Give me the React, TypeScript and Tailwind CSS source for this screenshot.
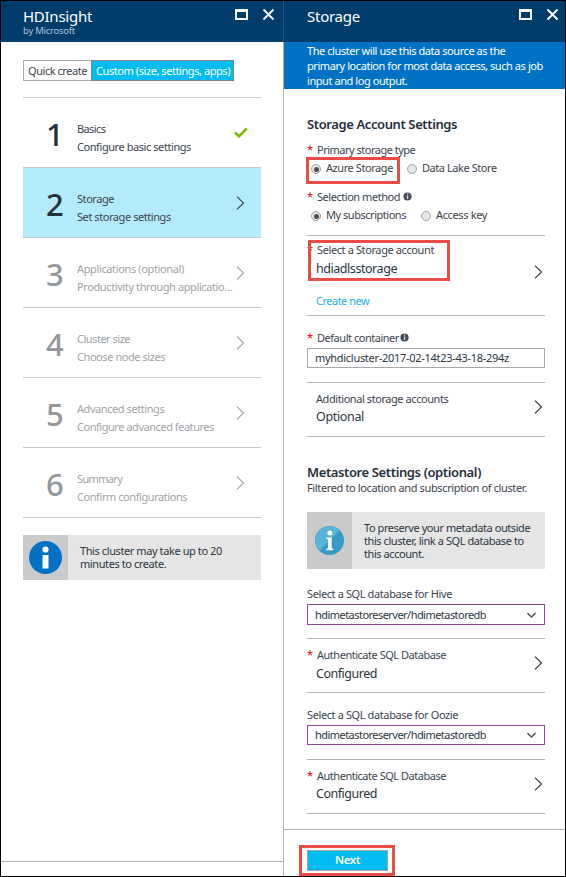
import type { ReactNode } from "react";

function WindowButtons() {
  return (
    <svg width="40" height="14" viewBox="0 0 40 14" fill="none" className="text-white">
      <path d="M0 2h13v11H0zM2 5v6h9V5z" fill="currentColor" fillRule="evenodd" />
      <path d="M28.5 2.5l10 10M38.5 2.5l-10 10" stroke="currentColor" strokeWidth="1.8" />
    </svg>
  );
}

function Chevron({ className = "" }: { className?: string }) {
  return (
    <svg width="9" height="14" viewBox="0 0 9 14" fill="none" className={`shrink-0 ${className}`}>
      <path d="M1 0.7L7.5 7L1 13.3" stroke="currentColor" strokeWidth="1.1" />
    </svg>
  );
}

function BladeHeader({ title, by, pad }: { title: string; by?: string; pad: string }) {
  return (
    <header className={`flex h-[41px] justify-between bg-[#003d6b] pt-[6px] ${pad}`}>
      <div>
        <h1 className="text-[15px] leading-[18px] tracking-[-0.26px] text-white">{title}</h1>
        {by && <p className="text-[9.5px] leading-[11px] tracking-[-0.26px] text-[#a9c3dc]">{by}</p>}
      </div>
      <WindowButtons />
    </header>
  );
}

type Step = { n: number; title: string; sub: string; t1: string; t2: string; state: "done" | "active" | "off" };

const steps: Step[] = [
  { n: 1, title: "Basics", sub: "Configure basic settings", t1: "tracking-[-0.6px]", t2: "", state: "done" },
  { n: 2, title: "Storage", sub: "Set storage settings", t1: "", t2: "", state: "active" },
  { n: 3, title: "Applications (optional)", sub: "Productivity through applicatio...", t1: "tracking-[-0.37px]", t2: "tracking-[-0.39px]", state: "off" },
  { n: 4, title: "Cluster size", sub: "Choose node sizes", t1: "tracking-[-0.49px]", t2: "", state: "off" },
  { n: 5, title: "Advanced settings", sub: "Configure advanced features", t1: "", t2: "tracking-[-0.46px]", state: "off" },
  { n: 6, title: "Summary", sub: "Confirm configurations", t1: "tracking-[-0.66px]", t2: "", state: "off" },
];

function StepRow({ step }: { step: Step }) {
  const off = step.state === "off";
  return (
    <li
      className={`flex h-[70px] border-t border-[#c8c8c8] pl-[23px] ${step.state === "active" ? "bg-[#b3ebfb]" : ""} ${off ? "text-[#a0a3a6]" : "text-[#3b444d]"}`}
    >
      <div className={`w-[31px] pt-[14px] text-[31px] font-medium leading-[44px] ${off ? "text-[#94979a]" : "text-[#25303b]"}`}>
        {step.n}
      </div>
      <div className="flex w-[159px] flex-col gap-px whitespace-nowrap pt-[22px] leading-[17px]">
        <div className={step.t1}>{step.title}</div>
        <div className={step.t2}>{step.sub}</div>
      </div>
      {step.state === "done" ? (
        <svg width="14" height="12" viewBox="0 0 14 12" fill="none" className="mt-[29px] -ml-[2px]">
          <path d="M0.9 5.4L5 9.3L12.7 1.4" stroke="#7fba00" strokeWidth="2.6" />
        </svg>
      ) : (
        <Chevron className="mt-[28px]" />
      )}
    </li>
  );
}

function Star() {
  return (
    <svg width="6" height="6" viewBox="0 0 6 6" className="mt-[3px] mr-[4px] shrink-0">
      <path d="M3 0.3V3M0.5 2.2L3 3L5.5 2.2M1.4 5.3L3 3L4.6 5.3" stroke="#e0242f" strokeWidth="1.1" fill="none" />
    </svg>
  );
}

function Hint({ className = "" }: { className?: string }) {
  return (
    <svg width="9" height="9" viewBox="0 0 9 9" className={`mt-[3px] ${className}`}>
      <circle cx="4.5" cy="4.5" r="4.1" fill="#464f59" />
      <path d="M4 1.6h1.2v1.2H4zM4 3.6h1.2v3.5H4z" fill="#d5d8da" />
    </svg>
  );
}

function Label({ children, className = "" }: { children: ReactNode; className?: string }) {
  return <div className={`flex h-[15px] whitespace-nowrap leading-[15px] text-[#3b444d] ${className}`}>{children}</div>;
}

function Radio({ checked, children, className = "" }: { checked?: boolean; children: ReactNode; className?: string }) {
  return (
    <div className={`flex h-[15px] items-start whitespace-nowrap leading-[15px] ${className}`}>
      <span className="mt-[4px] mr-[5px] flex size-[10px] items-center justify-center rounded-full border border-[#a2a2a2] bg-[#e6e6e6]">
        {checked && <span className="size-[5px] rounded-full bg-[#4c4c4c]" />}
      </span>
      {children}
    </div>
  );
}

function Rule({ className = "" }: { className?: string }) {
  return <div className={`h-px bg-[#b0b2b4] ${className}`} />;
}

function Value({ children, className = "" }: { children: ReactNode; className?: string }) {
  return <div className={`pl-[9px] text-[12.5px] leading-[17px] text-[#2c3640] ${className}`}>{children}</div>;
}

function Select({ className }: { className: string }) {
  return (
    <div className={`mt-[3px] flex items-center justify-between border border-[#8f4896] pr-[7px] pl-[7px] text-[#2c3640] ${className}`}>
      <span className="leading-[15px] tracking-[-0.54px]">hdimetastoreserver/hdimetastoredb</span>
      <svg width="11" height="8" viewBox="0 0 11 8" fill="none">
        <path d="M1.4 2L5.5 6L9.6 2" stroke="#4a525a" strokeWidth="1.5" />
      </svg>
    </div>
  );
}

function Highlight({ className }: { className: string }) {
  return <div className={`pointer-events-none absolute border-3 border-[#e84c46] ${className}`} />;
}

export default function App() {
  return (
    <div className="relative flex h-[877px] w-[566px] overflow-hidden border border-black bg-white font-['Noto_Sans','Open_Sans',sans-serif] text-[11px] tracking-[-0.43px]">
      <section className="flex w-[282px] flex-col">
        <BladeHeader title="HDInsight" by="by Microsoft" pad="pl-[22px] pr-[8px]" />
        <div className="flex-1 pr-[22px] pl-[22px]">
          <div className="mt-[18px] flex h-[21px] w-[211px] whitespace-nowrap leading-[20px]">
            <div className="w-[68px] border border-r-0 border-[#aaaaaa] pl-[4px] text-[#3b444d] tracking-[-0.45px]">Quick create</div>
            <div className="flex-1 border border-[#7f8386] bg-[#00bcf2] pl-[4px] text-white">Custom (size, settings, apps)</div>
          </div>
          <ul className="mt-[16px] border-b border-[#c8c8c8]">
            {steps.map((s) => (
              <StepRow key={s.n} step={s} />
            ))}
          </ul>
          <div className="mt-[17px] flex h-[45px] bg-[#e5e5e5]">
            <div className="flex w-[45px] items-center justify-center bg-[#cacaca]">
              <svg width="33" height="33" viewBox="0 0 33 33">
                <circle cx="16.5" cy="16.5" r="16.5" fill="#0072c6" />
                <circle cx="16.5" cy="8.5" r="3.1" fill="#fff" />
                <path d="M13.5 14h6v13.5h-6z" fill="#fff" />
              </svg>
            </div>
            <p className="pt-[9px] pl-[12px] leading-[13px] tracking-[-0.41px] text-[#2c3640]">
              This cluster may take up to 20
              <br />
              minutes to create.
            </p>
          </div>
        </div>
        <footer className="h-[15px] border-t border-[#b0b0b0]" />
      </section>

      <div className="w-px bg-[#b0b0b0]">
        <div className="h-[41px] bg-[#1f5583]" />
      </div>

      <section className="flex w-[281px] flex-col">
        <BladeHeader title="Storage" pad="pl-[23px] pr-[6px]" />
        <div className="h-[47px] whitespace-nowrap bg-[#0072c6] pt-px pl-[23px] leading-[15px] text-white">
          The cluster will use this data source as the
          <br />
          primary location for most data access, such as job
          <br />
          input and log output.
        </div>

        <div className="flex w-[261px] flex-col pt-[26px] pl-[23px]">
          <h2 className="text-[13px] font-semibold leading-[18px] tracking-[-0.39px] text-[#25303b]">Storage Account Settings</h2>
          <Label className="mt-[9px] tracking-[-0.5px]">
            <Star />
            Primary storage type
          </Label>
          <div className="mt-[3px] flex pl-[4px] text-[#3b444d]">
            <Radio checked>Azure Storage</Radio>
            <Radio className="ml-[14px]">Data Lake Store</Radio>
          </div>
          <Label className="mt-[14px] tracking-[-0.46px]">
            <Star />
            Selection method
            <Hint className="ml-[3px]" />
          </Label>
          <div className="mt-[3px] flex pl-[4px] text-[#3b444d]">
            <Radio checked className="tracking-[-0.47px]">My subscriptions</Radio>
            <Radio className="ml-[15px] tracking-[-0.36px]">Access key</Radio>
          </div>
          <Rule className="mt-[13px]" />

          <div className="flex justify-between">
            <div>
              <Label className="mt-[6px] tracking-[-0.39px]">
                <Star />
                Select a Storage account
              </Label>
              <Value className="mt-[3px] tracking-[-0.45px]">hdiadlsstorage</Value>
              <div className="mt-[16px] pl-[9px] leading-[15px] tracking-[-0.5px] text-[#1fb1ec]">Create new</div>
            </div>
            <Chevron className="mt-[29px] mr-[2px] text-[#2c3640]" />
          </div>
          <Rule className="mt-[7px]" />

          <Label className="mt-[14px] tracking-[-0.47px]">
            <Star />
            Default container
            <Hint className="ml-px" />
          </Label>
          <div className="mt-[3px] h-[20px] border border-[#a6a8aa] pl-[7px] leading-[17px] tracking-[-0.29px] text-[#2c3640]">
            myhdicluster-2017-02-14t23-43-18-294z
          </div>
          <Rule className="mt-[14px]" />

          <div className="flex justify-between">
            <div>
              <Label className="mt-[8px] pl-[9px]">Additional storage accounts</Label>
              <Value className="mt-[2px] tracking-[-0.34px]">Optional</Value>
            </div>
            <Chevron className="mt-[17px] mr-[2px] text-[#2c3640]" />
          </div>
          <Rule className="mt-[11px]" />

          <h2 className="mt-[26px] text-[13px] font-semibold leading-[18px] tracking-[-0.38px] text-[#25303b]">Metastore Settings (optional)</h2>
          <Label className="-mt-px tracking-[-0.37px]">Filtered to location and subscription of cluster.</Label>
          <div className="mt-[17px] flex h-[57px] bg-[#e5e5e5]">
            <div className="flex w-[45px] items-center justify-center bg-[#cacaca]">
              <svg width="29" height="29" viewBox="0 0 29 29">
                <circle cx="14.5" cy="14.5" r="14.5" fill="#3999c6" />
                <path d="M24.75 4.25A14.5 14.5 0 0 0 4.25 24.75z" fill="#59b4d9" />
                <circle cx="14.8" cy="7" r="2.5" fill="#fff" />
                <path d="M11.3 11.5h5.4v11h1.6v1.7h-7v-1.7h1.7v-9.3h-1.7z" fill="#fff" />
              </svg>
            </div>
            <p className="whitespace-nowrap pt-[9px] pl-[12px] leading-[13px] text-[#2c3640]">
              To preserve your metadata outside
              <br />
              this cluster, link a SQL database to
              <br />
              this account.
            </p>
          </div>

          <Label className="mt-[17px] tracking-[-0.39px]">Select a SQL database for Hive</Label>
          <Select className="h-[21px]" />
          <Rule className="mt-[13px]" />
          <div className="flex justify-between">
            <div>
              <Label className="mt-[8px] tracking-[-0.48px]">
                <Star />
                Authenticate SQL Database
              </Label>
              <Value className="mt-[3px] tracking-[-0.48px]">Configured</Value>
            </div>
            <Chevron className="mt-[17px] mr-[2px] text-[#2c3640]" />
          </div>
          <Rule className="mt-[10px]" />

          <Label className="mt-[14px] tracking-[-0.39px]">Select a SQL database for Oozie</Label>
          <Select className="h-[20px] pb-px" />
          <Rule className="mt-[14px]" />
          <div className="flex justify-between">
            <div>
              <Label className="mt-[8px] tracking-[-0.48px]">
                <Star />
                Authenticate SQL Database
              </Label>
              <Value className="mt-[2px] tracking-[-0.48px]">Configured</Value>
            </div>
            <Chevron className="mt-[17px] mr-[2px] text-[#2c3640]" />
          </div>
          <Rule className="mt-[11px]" />
        </div>

        <footer className="mt-[15px] flex-1 border-t border-[#b0b0b0] pt-[20px] pl-[23px]">
          <button className="block h-[21px] w-[81px] border border-[#a6a8aa] bg-[#00bcf2] pb-[2px] text-[11.5px] font-semibold leading-[17px] text-white">
            Next
          </button>
        </footer>
      </section>

      <Highlight className="top-[156px] left-[305px] h-[27px] w-[94px]" />
      <Highlight className="top-[239px] left-[307px] h-[41px] w-[142px]" />
      <Highlight className="top-[844px] left-[298px] h-[31px] w-[96px]" />
    </div>
  );
}
